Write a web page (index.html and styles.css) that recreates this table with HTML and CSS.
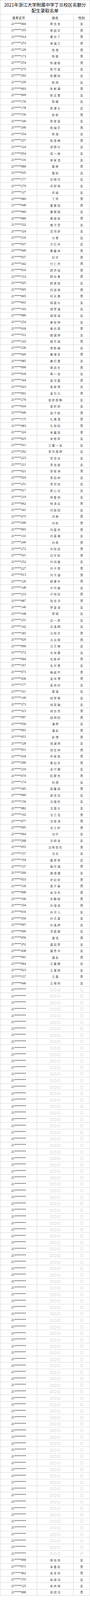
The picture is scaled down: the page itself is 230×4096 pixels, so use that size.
FILE: index.html
```html
<!DOCTYPE html>
<html lang="zh-CN">
<head>
<meta charset="utf-8">
<title>2021年浙江大学附属中学丁兰校区名额分配生录取名单</title>
<link rel="stylesheet" href="styles.css">
</head>
<body>
<div class="sheet">
<div class="title">2021年浙江大学附属中学丁兰校区名额分<br>配生录取名单</div>
<div class="row head"><span class="c1">准考证号</span><span class="c2">姓名</span><span class="c3">性别</span></div>
<div class="row"><span class="c1">21****066</span><span class="c2">蔡佳杏</span><span class="c3">女</span></div>
<div class="row"><span class="c1">21****195</span><span class="c2">蔡喆宇</span><span class="c3">男</span></div>
<div class="row"><span class="c1">21****014</span><span class="c2">曹亦丁</span><span class="c3">男</span></div>
<div class="row"><span class="c1">21****253</span><span class="c2">常涵之</span><span class="c3">男</span></div>
<div class="row"><span class="c1">21****120</span><span class="c2">陈澄</span><span class="c3">男</span></div>
<div class="row"><span class="c1">21****173</span><span class="c2">陈聪</span><span class="c3">男</span></div>
<div class="row"><span class="c1">21****254</span><span class="c2">陈键皓</span><span class="c3">男</span></div>
<div class="row"><span class="c1">21****275</span><span class="c2">陈可宣</span><span class="c3">女</span></div>
<div class="row"><span class="c1">21****202</span><span class="c2">陈麓阳</span><span class="c3">女</span></div>
<div class="row"><span class="c1">21****239</span><span class="c2">陈琪</span><span class="c3">女</span></div>
<div class="row"><span class="c1">21****003</span><span class="c2">陈斯灏</span><span class="c3">男</span></div>
<div class="row"><span class="c1">21****009</span><span class="c2">陈文蕾</span><span class="c3">女</span></div>
<div class="row"><span class="c1">21****170</span><span class="c2">陈曦</span><span class="c3">女</span></div>
<div class="row"><span class="c1">21****178</span><span class="c2">陈潇乐</span><span class="c3">女</span></div>
<div class="row"><span class="c1">21****156</span><span class="c2">陈新</span><span class="c3">男</span></div>
<div class="row"><span class="c1">21****100</span><span class="c2">陈絮姿</span><span class="c3">女</span></div>
<div class="row"><span class="c1">21****246</span><span class="c2">陈煊宇</span><span class="c3">男</span></div>
<div class="row"><span class="c1">21****354</span><span class="c2">陈逸</span><span class="c3">女</span></div>
<div class="row"><span class="c1">21****237</span><span class="c2">陈昱畅</span><span class="c3">男</span></div>
<div class="row"><span class="c1">21****124</span><span class="c2">成楚仪</span><span class="c3">女</span></div>
<div class="row"><span class="c1">21****054</span><span class="c2">成一旎</span><span class="c3">女</span></div>
<div class="row"><span class="c1">21****116</span><span class="c2">崇家滇</span><span class="c3">女</span></div>
<div class="row"><span class="c1">21****080</span><span class="c2">戴睿</span><span class="c3">男</span></div>
<div class="row"><span class="c1">21****035</span><span class="c2">戴阳</span><span class="c3">女</span></div>
<div class="row"><span class="c1">21****177</span><span class="c2">邓柳月</span><span class="c3">女</span></div>
<div class="row"><span class="c1">21****279</span><span class="c2">邓舒艳</span><span class="c3">女</span></div>
<div class="row"><span class="c1">21****127</span><span class="c2">邓颖</span><span class="c3">女</span></div>
<div class="row"><span class="c1">21****089</span><span class="c2">丁芮</span><span class="c3">男</span></div>
<div class="row"><span class="c1">21****048</span><span class="c2">董昊阳</span><span class="c3">男</span></div>
<div class="row"><span class="c1">21****060</span><span class="c2">董黎园</span><span class="c3">女</span></div>
<div class="row"><span class="c1">21****080</span><span class="c2">樊梁俊</span><span class="c3">男</span></div>
<div class="row"><span class="c1">21****332</span><span class="c2">樊子萱</span><span class="c3">女</span></div>
<div class="row"><span class="c1">21****324</span><span class="c2">范玮妍</span><span class="c3">女</span></div>
<div class="row"><span class="c1">21****216</span><span class="c2">方蕾</span><span class="c3">女</span></div>
<div class="row"><span class="c1">21****037</span><span class="c2">方亿舟</span><span class="c3">女</span></div>
<div class="row"><span class="c1">21****040</span><span class="c2">费晨冉</span><span class="c3">男</span></div>
<div class="row"><span class="c1">21****037</span><span class="c2">封宇</span><span class="c3">男</span></div>
<div class="row"><span class="c1">21****342</span><span class="c2">付仁杰</span><span class="c3">男</span></div>
<div class="row"><span class="c1">21****016</span><span class="c2">顾杰铭</span><span class="c3">男</span></div>
<div class="row"><span class="c1">21****153</span><span class="c2">顾亦青</span><span class="c3">男</span></div>
<div class="row"><span class="c1">21****025</span><span class="c2">韩恩珠</span><span class="c3">女</span></div>
<div class="row"><span class="c1">21****005</span><span class="c2">何邵琦</span><span class="c3">男</span></div>
<div class="row"><span class="c1">21****005</span><span class="c2">何天昊</span><span class="c3">男</span></div>
<div class="row"><span class="c1">21****041</span><span class="c2">胡嘉仪</span><span class="c3">女</span></div>
<div class="row"><span class="c1">21****103</span><span class="c2">胡梦涵</span><span class="c3">女</span></div>
<div class="row"><span class="c1">21****086</span><span class="c2">胡怿凌</span><span class="c3">女</span></div>
<div class="row"><span class="c1">21****254</span><span class="c2">黄安琪</span><span class="c3">女</span></div>
<div class="row"><span class="c1">21****018</span><span class="c2">黄亦周</span><span class="c3">男</span></div>
<div class="row"><span class="c1">21****312</span><span class="c2">嵇涵琪</span><span class="c3">女</span></div>
<div class="row"><span class="c1">21****143</span><span class="c2">嵇宇成</span><span class="c3">男</span></div>
<div class="row"><span class="c1">21****236</span><span class="c2">季陈格</span><span class="c3">女</span></div>
<div class="row"><span class="c1">21****049</span><span class="c2">姜律丞</span><span class="c3">男</span></div>
<div class="row"><span class="c1">21****085</span><span class="c2">姜忆雪</span><span class="c3">女</span></div>
<div class="row"><span class="c1">21****090</span><span class="c2">蒋启东</span><span class="c3">男</span></div>
<div class="row"><span class="c1">21****018</span><span class="c2">蒋一含</span><span class="c3">女</span></div>
<div class="row"><span class="c1">21****344</span><span class="c2">金洪磊</span><span class="c3">男</span></div>
<div class="row"><span class="c1">21****023</span><span class="c2">金家琪</span><span class="c3">女</span></div>
<div class="row"><span class="c1">21****091</span><span class="c2">金可凡</span><span class="c3">男</span></div>
<div class="row"><span class="c1">21****270</span><span class="c2">金舒雯静</span><span class="c3">女</span></div>
<div class="row"><span class="c1">21****010</span><span class="c2">金昕妍</span><span class="c3">女</span></div>
<div class="row"><span class="c1">21****046</span><span class="c2">金子航</span><span class="c3">男</span></div>
<div class="row"><span class="c1">21****175</span><span class="c2">孔昊淏</span><span class="c3">男</span></div>
<div class="row"><span class="c1">21****083</span><span class="c2">孔悦阳</span><span class="c3">男</span></div>
<div class="row"><span class="c1">21****324</span><span class="c2">来晨阳</span><span class="c3">男</span></div>
<div class="row"><span class="c1">21****025</span><span class="c2">来晗弈</span><span class="c3">女</span></div>
<div class="row"><span class="c1">21****011</span><span class="c2">兰雷一诺</span><span class="c3">女</span></div>
<div class="row"><span class="c1">21****292</span><span class="c2">李岑煜婷</span><span class="c3">女</span></div>
<div class="row"><span class="c1">21****223</span><span class="c2">李佳佳</span><span class="c3">女</span></div>
<div class="row"><span class="c1">21****211</span><span class="c2">李佳颖</span><span class="c3">女</span></div>
<div class="row"><span class="c1">21****021</span><span class="c2">李俊涛</span><span class="c3">男</span></div>
<div class="row"><span class="c1">21****024</span><span class="c2">李田俐</span><span class="c3">女</span></div>
<div class="row"><span class="c1">21****251</span><span class="c2">李欣怡</span><span class="c3">女</span></div>
<div class="row"><span class="c1">21****017</span><span class="c2">廖心文</span><span class="c3">女</span></div>
<div class="row"><span class="c1">21****219</span><span class="c2">林星雨</span><span class="c3">女</span></div>
<div class="row"><span class="c1">21****062</span><span class="c2">林泽竑</span><span class="c3">男</span></div>
<div class="row"><span class="c1">21****341</span><span class="c2">刘辰阳</span><span class="c3">女</span></div>
<div class="row"><span class="c1">21****475</span><span class="c2">刘翀</span><span class="c3">男</span></div>
<div class="row"><span class="c1">21****200</span><span class="c2">刘杭</span><span class="c3">男</span></div>
<div class="row"><span class="c1">21****065</span><span class="c2">刘嘉杰</span><span class="c3">男</span></div>
<div class="row"><span class="c1">21****131</span><span class="c2">刘嘉凝</span><span class="c3">女</span></div>
<div class="row"><span class="c1">21****240</span><span class="c2">刘希</span><span class="c3">男</span></div>
<div class="row"><span class="c1">21****272</span><span class="c2">刘炫延</span><span class="c3">男</span></div>
<div class="row"><span class="c1">21****021</span><span class="c2">刘宇杭</span><span class="c3">男</span></div>
<div class="row"><span class="c1">21****252</span><span class="c2">刘羽馨</span><span class="c3">女</span></div>
<div class="row"><span class="c1">21****227</span><span class="c2">刘子昂</span><span class="c3">男</span></div>
<div class="row"><span class="c1">21****013</span><span class="c2">刘子涵</span><span class="c3">男</span></div>
<div class="row"><span class="c1">21****126</span><span class="c2">柳渠丰</span><span class="c3">男</span></div>
<div class="row"><span class="c1">21****148</span><span class="c2">卢可馨</span><span class="c3">女</span></div>
<div class="row"><span class="c1">21****233</span><span class="c2">卢雨琛</span><span class="c3">男</span></div>
<div class="row"><span class="c1">21****087</span><span class="c2">陆佳洋</span><span class="c3">男</span></div>
<div class="row"><span class="c1">21****146</span><span class="c2">罗金淑</span><span class="c3">女</span></div>
<div class="row"><span class="c1">21****108</span><span class="c2">罗顺</span><span class="c3">女</span></div>
<div class="row"><span class="c1">21****231</span><span class="c2">吕一彦</span><span class="c3">女</span></div>
<div class="row"><span class="c1">21****142</span><span class="c2">吕逸桐</span><span class="c3">女</span></div>
<div class="row"><span class="c1">21****185</span><span class="c2">马邦宇</span><span class="c3">男</span></div>
<div class="row"><span class="c1">21****029</span><span class="c2">马天翔</span><span class="c3">男</span></div>
<div class="row"><span class="c1">21****090</span><span class="c2">马艾琳</span><span class="c3">女</span></div>
<div class="row"><span class="c1">21****372</span><span class="c2">毛安康</span><span class="c3">女</span></div>
<div class="row"><span class="c1">21****004</span><span class="c2">毛俊轩</span><span class="c3">男</span></div>
<div class="row"><span class="c1">21****167</span><span class="c2">毛开慧</span><span class="c3">女</span></div>
<div class="row"><span class="c1">21****073</span><span class="c2">梅峻齐</span><span class="c3">男</span></div>
<div class="row"><span class="c1">21****436</span><span class="c2">孟庆博</span><span class="c3">男</span></div>
<div class="row"><span class="c1">21****177</span><span class="c2">孟雨欣</span><span class="c3">女</span></div>
<div class="row"><span class="c1">21****311</span><span class="c2">莫涵</span><span class="c3">女</span></div>
<div class="row"><span class="c1">21****140</span><span class="c2">倪梦萌</span><span class="c3">女</span></div>
<div class="row"><span class="c1">21****373</span><span class="c2">倪奕璇</span><span class="c3">女</span></div>
<div class="row"><span class="c1">21****315</span><span class="c2">倪志杰</span><span class="c3">男</span></div>
<div class="row"><span class="c1">21****097</span><span class="c2">钮明阳</span><span class="c3">男</span></div>
<div class="row"><span class="c1">21****056</span><span class="c2">潘婷</span><span class="c3">女</span></div>
<div class="row"><span class="c1">21****001</span><span class="c2">潘岩</span><span class="c3">男</span></div>
<div class="row"><span class="c1">21****055</span><span class="c2">彭博</span><span class="c3">男</span></div>
<div class="row"><span class="c1">21****528</span><span class="c2">钱涵玥</span><span class="c3">女</span></div>
<div class="row"><span class="c1">21****051</span><span class="c2">钱佳烨</span><span class="c3">男</span></div>
<div class="row"><span class="c1">21****418</span><span class="c2">乔家俊</span><span class="c3">男</span></div>
<div class="row"><span class="c1">21****266</span><span class="c2">秦钰杰</span><span class="c3">男</span></div>
<div class="row"><span class="c1">21****210</span><span class="c2">全宁娜</span><span class="c3">女</span></div>
<div class="row"><span class="c1">21****070</span><span class="c2">阮蒙杰</span><span class="c3">男</span></div>
<div class="row"><span class="c1">21****174</span><span class="c2">阮想</span><span class="c3">女</span></div>
<div class="row"><span class="c1">21****305</span><span class="c2">邵晨旭</span><span class="c3">男</span></div>
<div class="row"><span class="c1">21****060</span><span class="c2">邵佳钰</span><span class="c3">女</span></div>
<div class="row"><span class="c1">21****150</span><span class="c2">沈葭杭</span><span class="c3">女</span></div>
<div class="row"><span class="c1">21****082</span><span class="c2">沈嘉仪</span><span class="c3">女</span></div>
<div class="row"><span class="c1">21****142</span><span class="c2">沈江浩</span><span class="c3">男</span></div>
<div class="row"><span class="c1">21****077</span><span class="c2">沈俊涛</span><span class="c3">男</span></div>
<div class="row"><span class="c1">21****095</span><span class="c2">沈士轩</span><span class="c3">男</span></div>
<div class="row"><span class="c1">21****064</span><span class="c2">沈纤</span><span class="c3">女</span></div>
<div class="row"><span class="c1">21****268</span><span class="c2">沈妍含</span><span class="c3">女</span></div>
<div class="row"><span class="c1">21****055</span><span class="c2">沈杨哲伦</span><span class="c3">男</span></div>
<div class="row"><span class="c1">21****157</span><span class="c2">沈优</span><span class="c3">女</span></div>
<div class="row"><span class="c1">21****194</span><span class="c2">盛菲菲</span><span class="c3">女</span></div>
<div class="row"><span class="c1">21****137</span><span class="c2">施宇涵</span><span class="c3">男</span></div>
<div class="row"><span class="c1">21****266</span><span class="c2">施语璐</span><span class="c3">女</span></div>
<div class="row"><span class="c1">21****033</span><span class="c2">史纪欢</span><span class="c3">男</span></div>
<div class="row"><span class="c1">21****118</span><span class="c2">束子豪</span><span class="c3">男</span></div>
<div class="row"><span class="c1">21****008</span><span class="c2">宋洪杰</span><span class="c3">男</span></div>
<div class="row"><span class="c1">21****106</span><span class="c2">苏鹏程</span><span class="c3">男</span></div>
<div class="row"><span class="c1">21****104</span><span class="c2">孙澳游</span><span class="c3">男</span></div>
<div class="row"><span class="c1">21****016</span><span class="c2">孙可儿</span><span class="c3">女</span></div>
<div class="row"><span class="c1">21****350</span><span class="c2">孙艺嘉</span><span class="c3">女</span></div>
<div class="row"><span class="c1">21****007</span><span class="c2">孙逸婷</span><span class="c3">女</span></div>
<div class="row"><span class="c1">21****099</span><span class="c2">汤嘉馨</span><span class="c3">女</span></div>
<div class="row"><span class="c1">21****056</span><span class="c2">唐浩</span><span class="c3">男</span></div>
<div class="row"><span class="c1">21****252</span><span class="c2">唐茹梦</span><span class="c3">女</span></div>
<div class="row"><span class="c1">21****438</span><span class="c2">唐思月</span><span class="c3">女</span></div>
<div class="row"><span class="c1">21****001</span><span class="c2">唐岩</span><span class="c3">男</span></div>
<div class="row"><span class="c1">21****064</span><span class="c2">王晨曦</span><span class="c3">女</span></div>
<div class="row"><span class="c1">21****023</span><span class="c2">王澈扬</span><span class="c3">女</span></div>
<div class="row"><span class="c1">21****157</span><span class="c2">王磊</span><span class="c3">男</span></div>
<div class="row"><span class="c1">21****046</span><span class="c2">王萌雨</span><span class="c3">女</span></div>
<div class="row"><span class="c1">21*******</span><span class="c2">○○○</span><span class="c3">○</span></div>
<div class="row"><span class="c1">21*******</span><span class="c2">○○○</span><span class="c3">○</span></div>
<div class="row"><span class="c1">21*******</span><span class="c2">○○○</span><span class="c3">○</span></div>
<div class="row"><span class="c1">21*******</span><span class="c2">○○○</span><span class="c3">○</span></div>
<div class="row"><span class="c1">21*******</span><span class="c2">○○○</span><span class="c3">○</span></div>
<div class="row"><span class="c1">21*******</span><span class="c2">○○○</span><span class="c3">○</span></div>
<div class="row"><span class="c1">21*******</span><span class="c2">○○○</span><span class="c3">○</span></div>
<div class="row"><span class="c1">21*******</span><span class="c2">○○○</span><span class="c3">○</span></div>
<div class="row"><span class="c1">21*******</span><span class="c2">○○○</span><span class="c3">○</span></div>
<div class="row"><span class="c1">21*******</span><span class="c2">○○○</span><span class="c3">○</span></div>
<div class="row"><span class="c1">21*******</span><span class="c2">○○○</span><span class="c3">○</span></div>
<div class="row"><span class="c1">21*******</span><span class="c2">○○○</span><span class="c3">○</span></div>
<div class="row"><span class="c1">21*******</span><span class="c2">○○○</span><span class="c3">○</span></div>
<div class="row"><span class="c1">21*******</span><span class="c2">○○○</span><span class="c3">○</span></div>
<div class="row"><span class="c1">21*******</span><span class="c2">○○○</span><span class="c3">○</span></div>
<div class="row"><span class="c1">21*******</span><span class="c2">○○○</span><span class="c3">○</span></div>
<div class="row"><span class="c1">21*******</span><span class="c2">○○○</span><span class="c3">○</span></div>
<div class="row"><span class="c1">21*******</span><span class="c2">○○○</span><span class="c3">○</span></div>
<div class="row"><span class="c1">21*******</span><span class="c2">○○○</span><span class="c3">○</span></div>
<div class="row"><span class="c1">21*******</span><span class="c2">○○○</span><span class="c3">○</span></div>
<div class="row"><span class="c1">21*******</span><span class="c2">○○○</span><span class="c3">○</span></div>
<div class="row"><span class="c1">21*******</span><span class="c2">○○○</span><span class="c3">○</span></div>
<div class="row"><span class="c1">21*******</span><span class="c2">○○○</span><span class="c3">○</span></div>
<div class="row"><span class="c1">21*******</span><span class="c2">○○○</span><span class="c3">○</span></div>
<div class="row"><span class="c1">21*******</span><span class="c2">○○○</span><span class="c3">○</span></div>
<div class="row"><span class="c1">21*******</span><span class="c2">○○○</span><span class="c3">○</span></div>
<div class="row"><span class="c1">21*******</span><span class="c2">○○○</span><span class="c3">○</span></div>
<div class="row"><span class="c1">21*******</span><span class="c2">○○○</span><span class="c3">○</span></div>
<div class="row"><span class="c1">21*******</span><span class="c2">○○○</span><span class="c3">○</span></div>
<div class="row"><span class="c1">21*******</span><span class="c2">○○○</span><span class="c3">○</span></div>
<div class="row"><span class="c1">21*******</span><span class="c2">○○○</span><span class="c3">○</span></div>
<div class="row"><span class="c1">21*******</span><span class="c2">○○○</span><span class="c3">○</span></div>
<div class="row"><span class="c1">21*******</span><span class="c2">○○○</span><span class="c3">○</span></div>
<div class="row"><span class="c1">21*******</span><span class="c2">○○○</span><span class="c3">○</span></div>
<div class="row"><span class="c1">21*******</span><span class="c2">○○○</span><span class="c3">○</span></div>
<div class="row"><span class="c1">21*******</span><span class="c2">○○○</span><span class="c3">○</span></div>
<div class="row"><span class="c1">21*******</span><span class="c2">○○○</span><span class="c3">○</span></div>
<div class="row"><span class="c1">21*******</span><span class="c2">○○○</span><span class="c3">○</span></div>
<div class="row"><span class="c1">21*******</span><span class="c2">○○○</span><span class="c3">○</span></div>
<div class="row"><span class="c1">21*******</span><span class="c2">○○○</span><span class="c3">○</span></div>
<div class="row"><span class="c1">21*******</span><span class="c2">○○○</span><span class="c3">○</span></div>
<div class="row"><span class="c1">21*******</span><span class="c2">○○○</span><span class="c3">○</span></div>
<div class="row"><span class="c1">21*******</span><span class="c2">○○○</span><span class="c3">○</span></div>
<div class="row"><span class="c1">21*******</span><span class="c2">○○○</span><span class="c3">○</span></div>
<div class="row"><span class="c1">21*******</span><span class="c2">○○○</span><span class="c3">○</span></div>
<div class="row"><span class="c1">21*******</span><span class="c2">○○○</span><span class="c3">○</span></div>
<div class="row"><span class="c1">21*******</span><span class="c2">○○○</span><span class="c3">○</span></div>
<div class="row"><span class="c1">21*******</span><span class="c2">○○○</span><span class="c3">○</span></div>
<div class="row"><span class="c1">21*******</span><span class="c2">○○○</span><span class="c3">○</span></div>
<div class="row"><span class="c1">21*******</span><span class="c2">○○○</span><span class="c3">○</span></div>
<div class="row"><span class="c1">21*******</span><span class="c2">○○○</span><span class="c3">○</span></div>
<div class="row"><span class="c1">21*******</span><span class="c2">○○○</span><span class="c3">○</span></div>
<div class="row"><span class="c1">21*******</span><span class="c2">○○○</span><span class="c3">○</span></div>
<div class="row"><span class="c1">21*******</span><span class="c2">○○○</span><span class="c3">○</span></div>
<div class="row"><span class="c1">21*******</span><span class="c2">○○○</span><span class="c3">○</span></div>
<div class="row"><span class="c1">21*******</span><span class="c2">○○○</span><span class="c3">○</span></div>
<div class="row"><span class="c1">21*******</span><span class="c2">○○○</span><span class="c3">○</span></div>
<div class="row"><span class="c1">21*******</span><span class="c2">○○○</span><span class="c3">○</span></div>
<div class="row"><span class="c1">21*******</span><span class="c2">○○○</span><span class="c3">○</span></div>
<div class="row"><span class="c1">21*******</span><span class="c2">○○○</span><span class="c3">○</span></div>
<div class="row"><span class="c1">21*******</span><span class="c2">○○○</span><span class="c3">○</span></div>
<div class="row"><span class="c1">21*******</span><span class="c2">○○○</span><span class="c3">○</span></div>
<div class="row"><span class="c1">21*******</span><span class="c2">○○○</span><span class="c3">○</span></div>
<div class="row"><span class="c1">21*******</span><span class="c2">○○○</span><span class="c3">○</span></div>
<div class="row"><span class="c1">21*******</span><span class="c2">○○○</span><span class="c3">○</span></div>
<div class="row"><span class="c1">21*******</span><span class="c2">○○○</span><span class="c3">○</span></div>
<div class="row"><span class="c1">21*******</span><span class="c2">○○○</span><span class="c3">○</span></div>
<div class="row"><span class="c1">21*******</span><span class="c2">○○○</span><span class="c3">○</span></div>
<div class="row"><span class="c1">21*******</span><span class="c2">○○○</span><span class="c3">○</span></div>
<div class="row"><span class="c1">21*******</span><span class="c2">○○○</span><span class="c3">○</span></div>
<div class="row"><span class="c1">21*******</span><span class="c2">○○○</span><span class="c3">○</span></div>
<div class="row"><span class="c1">21*******</span><span class="c2">○○○</span><span class="c3">○</span></div>
<div class="row"><span class="c1">21*******</span><span class="c2">○○○</span><span class="c3">○</span></div>
<div class="row"><span class="c1">21*******</span><span class="c2">○○○</span><span class="c3">○</span></div>
<div class="row"><span class="c1">21*******</span><span class="c2">○○○</span><span class="c3">○</span></div>
<div class="row"><span class="c1">21*******</span><span class="c2">○○○</span><span class="c3">○</span></div>
<div class="row"><span class="c1">21*******</span><span class="c2">○○○</span><span class="c3">○</span></div>
<div class="row"><span class="c1">21*******</span><span class="c2">○○○</span><span class="c3">○</span></div>
<div class="row"><span class="c1">21*******</span><span class="c2">○○○</span><span class="c3">○</span></div>
<div class="row"><span class="c1">21*******</span><span class="c2">○○○</span><span class="c3">○</span></div>
<div class="row"><span class="c1">21*******</span><span class="c2">○○○</span><span class="c3">○</span></div>
<div class="row"><span class="c1">21*******</span><span class="c2">○○○</span><span class="c3">○</span></div>
<div class="row"><span class="c1">21*******</span><span class="c2">○○○</span><span class="c3">○</span></div>
<div class="row"><span class="c1">21*******</span><span class="c2">○○○</span><span class="c3">○</span></div>
<div class="row"><span class="c1">21*******</span><span class="c2">○○○</span><span class="c3">○</span></div>
<div class="row"><span class="c1">21*******</span><span class="c2">○○○</span><span class="c3">○</span></div>
<div class="row"><span class="c1">21*******</span><span class="c2">○○○</span><span class="c3">○</span></div>
<div class="row"><span class="c1">21*******</span><span class="c2">○○○</span><span class="c3">○</span></div>
<div class="row"><span class="c1">21****090</span><span class="c2">周怡然</span><span class="c3">女</span></div>
<div class="row"><span class="c1">21****071</span><span class="c2">朱善凯</span><span class="c3">男</span></div>
<div class="row"><span class="c1">21****462</span><span class="c2">朱言序</span><span class="c3">男</span></div>
<div class="row"><span class="c1">21****155</span><span class="c2">朱绎词</span><span class="c3">女</span></div>
<div class="row"><span class="c1">21****125</span><span class="c2">朱梓琦</span><span class="c3">女</span></div>
<div class="row"><span class="c1">21****088</span><span class="c2">祝颂词</span><span class="c3">男</span></div>
</div>
</body>
</html>
```

FILE: styles.css
```css
html, body {
  margin: 0;
  padding: 0;
  background: #ffffff;
}

.sheet {
  width: 230px;
  font-family: "Noto Sans CJK SC", "Noto Sans", sans-serif;
}

.title {
  box-sizing: border-box;
  height: 35.8px;
  padding-top: 4.4px;
  border: 1px solid #d6d6d6;
  border-bottom: none;
  text-align: center;
  font-size: 11.6px;
  line-height: 15.1px;
  color: #000000;
  white-space: nowrap;
  letter-spacing: -0.1px;
}

.row {
  display: grid;
  grid-template-columns: 95px 93px 42px;
  grid-template-rows: 16.6px;
  height: 16.6px;
}

.row > span {
  box-sizing: border-box;
  display: flex;
  align-items: center;
  justify-content: center;
  border-top: 1px solid #d6d6d6;
  border-right: 1px solid #d6d6d6;
  white-space: nowrap;
  overflow: hidden;
  line-height: 10px;
}

.row:last-child > span {
  border-bottom: 1px solid #d6d6d6;
}

.row > .c1 {
  border-left: 1px solid #d6d6d6;
  font-family: "Liberation Serif", "Noto Sans CJK SC", serif;
  font-size: 8.4px;
  color: #1a1a1a;
  padding-top: 1px;
}

.row > .c2 {
  font-size: 7.3px;
  letter-spacing: 2px;
  padding-left: 2px;
  color: #4a4a4a;
}

.row > .c3 {
  font-size: 7.6px;
  color: #4a4a4a;
}

.head > .c1,
.head > .c2,
.head > .c3 {
  font-family: "Noto Sans CJK SC", sans-serif;
  font-size: 8.2px;
  letter-spacing: 0;
  padding: 0;
  color: #1a1a1a;
}
```
